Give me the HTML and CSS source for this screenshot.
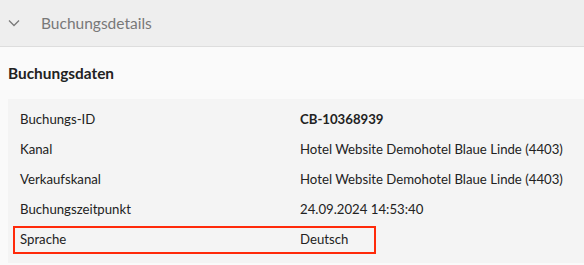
FILE: index.html
```html
<!DOCTYPE html>
<html lang="de">
  <head>
    <meta charset="UTF-8" />
    <title>Buchungsdetails</title>
    <link rel="stylesheet" href="styles.css">
  </head>
  <body>
    <div class="section-header">
      <svg class="chevron" width="12" height="8" viewBox="0 0 12 8">
        <path d="M1 1.5 L6 6.5 L11 1.5" fill="none" stroke="#7a7a7a" stroke-width="1.3" />
      </svg>
      <span class="section-title">Buchungsdetails</span>
    </div>

    <div class="content">
      <h3 class="group-title">Buchungsdaten</h3>
      <div class="panel">
        <div class="row">
          <span class="label">Buchungs-ID</span>
          <span class="value strong">CB-10368939</span>
        </div>
        <div class="row">
          <span class="label">Kanal</span>
          <span class="value">Hotel Website Demohotel Blaue Linde (4403)</span>
        </div>
        <div class="row">
          <span class="label">Verkaufskanal</span>
          <span class="value">Hotel Website Demohotel Blaue Linde (4403)</span>
        </div>
        <div class="row">
          <span class="label">Buchungszeitpunkt</span>
          <span class="value">24.09.2024 14:53:40</span>
        </div>
        <div class="row highlight">
          <span class="label">Sprache</span>
          <span class="value">Deutsch</span>
        </div>
      </div>
    </div>
  </body>
</html>
```

FILE: styles.css
```css
body {
  margin: 0;
  font-family: 'Lato', 'Open Sans', sans-serif;
  background-color: #fafafa;
  color: #222;
}
.section-header {
  display: flex;
  align-items: center;
  height: 46px;
  padding-left: 8px;
  background-color: #eeeeee;
  border-bottom: 1px solid #dddddd;
}
.chevron {
  display: block;
}
.section-title {
  margin-left: 21px;
  font-size: 15.5px;
  color: #787878;
}
.content {
  padding-left: 8px;
}
.group-title {
  margin: 0;
  height: 52px;
  line-height: 52px;
  font-size: 15.4px;
  font-weight: bold;
  color: #222;
}
.panel {
  background-color: #f4f4f4;
  padding: 5px 0 9px 0;
}
.row {
  position: relative;
  display: grid;
  grid-template-columns: 280px 1fr;
  height: 30px;
  align-items: center;
  padding-left: 12px;
  font-size: 13.2px;
}
.strong {
  font-weight: bold;
}
.highlight::after {
  content: "";
  position: absolute;
  left: 5px;
  top: 2px;
  width: 359px;
  height: 24px;
  border: 2px solid #ff2a0a;
}
```
